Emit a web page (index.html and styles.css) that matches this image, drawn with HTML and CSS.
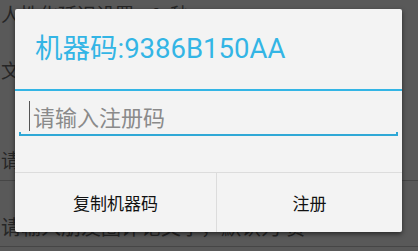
FILE: index.html
```html
<!DOCTYPE html>
<html lang="zh">
<head>
<meta charset="utf-8">
<title>注册</title>
<link rel="stylesheet" href="styles.css">
</head>
<body>
<div class="screen">
  <div class="bg-row row-a">人性化延迟设置&nbsp;&nbsp;&nbsp;&nbsp;0&nbsp;&nbsp;秒</div>
  <div class="bg-row row-b">文字内容</div>
  <div class="bg-row row-c">请输入评论内容</div>
  <div class="bg-rule rule-c"></div>
  <div class="bg-row row-d">请输入朋友圈评论文字，默认为 赞</div>
  <div class="bg-rule rule-d"></div>
</div>

<div class="dialog">
  <div class="title">机器码:9386B150AA</div>
  <div class="title-rule"></div>
  <div class="body">
    <div class="field">
      <div class="field-input">
        <span class="caret"></span>
        <span class="placeholder">请输入注册码</span>
      </div>
      <div class="field-line"></div>
    </div>
  </div>
  <div class="actions">
    <div class="btn btn-copy">复制机器码</div>
    <div class="btn btn-reg">注册</div>
  </div>
</div>
</body>
</html>
```

FILE: styles.css
```css
html, body {
  margin: 0;
  padding: 0;
}

body {
  width: 418px;
  height: 251px;
  overflow: hidden;
  background: #595959;
  font-family: "Roboto", "Noto Sans CJK SC", sans-serif;
  position: relative;
}

.screen {
  display: flex;
  flex-direction: column;
  padding-left: 1px;
  color: #262626;
  font-family: "Noto Sans CJK SC", sans-serif;
}

.bg-row {
  height: 16px;
  line-height: 16px;
  font-size: 19px;
  white-space: nowrap;
}

.row-a { margin-top: 6px; }
.row-b { margin-top: 40px; }
.row-c { margin-top: 74px; }
.rule-c { margin-top: 12px; }
.row-d { margin-top: 38px; font-size: 20px; }
.rule-d { margin-top: 11px; }

.bg-rule {
  height: 1px;
  margin-left: -1px;
  background: #464646;
}

.dialog {
  position: absolute;
  left: 15px;
  top: 9px;
  width: 387px;
  height: 223px;
  background: #f3f3f3;
  border-radius: 2px;
  box-shadow: 0 2px 5px rgba(0, 0, 0, 0.55);
  display: flex;
  flex-direction: column;
}

.title {
  height: 80px;
  display: flex;
  align-items: center;
  padding-left: 20px;
  font-size: 27.5px;
  line-height: 1;
  color: #33b5e5;
  white-space: nowrap;
}

.title-rule {
  height: 2px;
  background: #33b5e5;
}

.body {
  height: 81px;
  padding: 9px 4px 0;
  box-sizing: border-box;
}

.field {
  height: 36px;
  display: flex;
  flex-direction: column;
}

.field-input {
  flex: 1;
  display: flex;
  align-items: center;
  padding-left: 10px;
  font-family: "Noto Sans CJK SC", sans-serif;
}

.caret {
  width: 1px;
  height: 30px;
  background: #555;
  margin-right: 3px;
}

.placeholder {
  font-size: 22px;
  color: #8a8a8a;
}

.field-line {
  height: 3px;
  border: 2px solid #2fa8d6;
  border-top: 0;
}

.actions {
  height: 59px;
  border-top: 1px solid #dcdcdc;
  display: flex;
}

.btn {
  display: flex;
  align-items: center;
  justify-content: center;
  font-family: "Noto Sans CJK SC", sans-serif;
  font-size: 17px;
  color: #111;
}

.btn-copy {
  width: 201px;
}

.btn-reg {
  flex: 1;
  border-left: 1px solid #dcdcdc;
}
```
